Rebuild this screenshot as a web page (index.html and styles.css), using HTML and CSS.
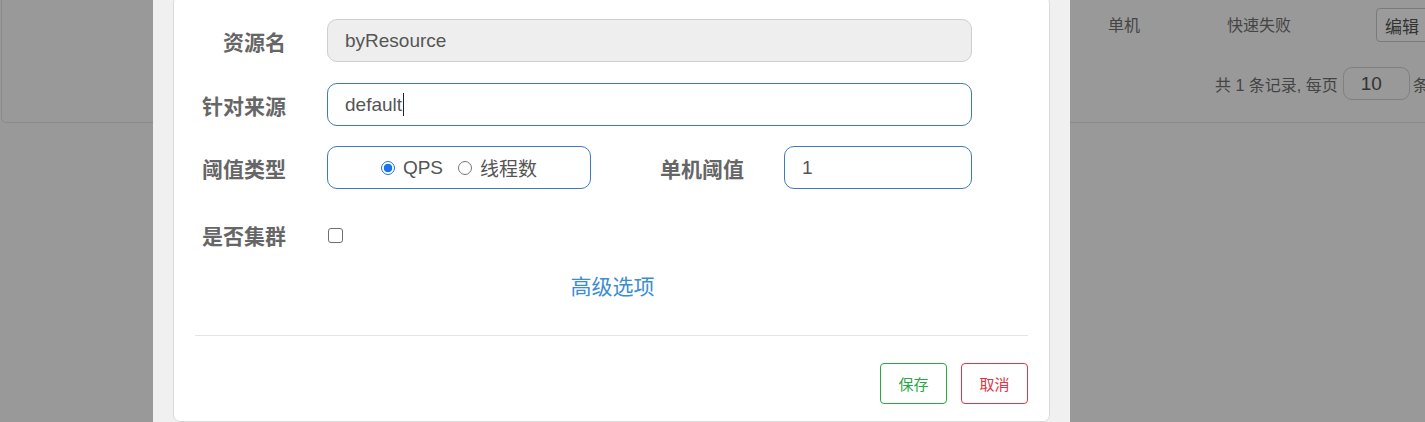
FILE: index.html
```html
<!DOCTYPE html>
<html lang="zh-CN">
<head>
<meta charset="utf-8">
<title>编辑流控规则</title>
<link rel="stylesheet" href="styles.css">
</head>
<body>
<div class="page">
  <div class="card">
    <div class="table-row">
      <span class="cell cell-mode">单机</span>
      <span class="cell cell-effect">快速失败</span>
      <span class="cell cell-op"><button class="bg-btn" type="button">编辑</button></span>
    </div>
    <div class="pager">
      <span class="pager-text">共 1 条记录, 每页</span>
      <span class="pager-input">10</span>
      <span class="pager-text">条</span>
    </div>
  </div>
</div>

<div class="modal">
  <div class="dialog">
    <div class="form">
      <div class="row">
        <label class="label">资源名</label>
        <div class="field field-disabled wide">byResource</div>
      </div>
      <div class="row">
        <label class="label">针对来源</label>
        <div class="field wide">default<span class="caret"></span></div>
      </div>
      <div class="row">
        <label class="label">阈值类型</label>
        <div class="field radio-box">
          <label class="radio"><input type="radio" name="grade" checked><span>QPS</span></label>
          <label class="radio"><input type="radio" name="grade"><span>线程数</span></label>
        </div>
        <label class="label label-mid">单机阈值</label>
        <div class="field narrow">1</div>
      </div>
      <div class="row row-check">
        <label class="label">是否集群</label>
        <input class="check" type="checkbox">
      </div>
      <div class="adv"><a class="adv-link" href="#">高级选项</a></div>
    </div>
    <div class="footer">
      <button class="btn btn-save" type="button">保存</button>
      <button class="btn btn-cancel" type="button">取消</button>
    </div>
  </div>
</div>
</body>
</html>
```

FILE: styles.css
```css
html, body {
  margin: 0;
  padding: 0;
  width: 1425px;
  height: 422px;
  overflow: hidden;
  background: #999999;
  font-family: "Liberation Sans", "Noto Sans CJK SC", sans-serif;
}

.page {
  position: relative;
  height: 422px;
}

.card {
  margin-left: 1px;
  margin-top: -10px;
  width: 1500px;
  height: 133px;
  border: 1px solid #8a8a8a;
  border-radius: 5px;
  box-sizing: border-box;
}

.table-row {
  display: flex;
  align-items: center;
  height: 56px;
  padding-top: 10px;
  box-sizing: border-box;
  color: #444;
  font-size: 16px;
}

.cell-mode {
  margin-left: 1106px;
  width: 119px;
}

.cell-effect {
  width: 149px;
}

.bg-btn {
  width: 60px;
  height: 34px;
  padding: 0 0 0 8px;
  text-align: left;
  background: #9b9b9b;
  border: 1px solid #7a7a7a;
  border-radius: 4px;
  color: #333;
  font-family: "Liberation Sans", "Noto Sans CJK SC", sans-serif;
  font-size: 17px;
  margin-top: 2px;
}

.pager {
  display: flex;
  align-items: center;
  margin-top: 20px;
  padding-left: 1213px;
  color: #444;
  font-size: 16px;
}

.pager-input {
  width: 67px;
  height: 33px;
  box-sizing: border-box;
  border: 1px solid #808080;
  border-radius: 9px;
  margin: 0 3px 0 5px;
  padding-left: 17px;
  line-height: 31px;
  font-size: 19px;
  color: #333;
}

.modal {
  position: absolute;
  left: 153px;
  top: 0;
  width: 917px;
  height: 422px;
  background: #f0f0f0;
  overflow: hidden;
}

.dialog {
  margin-left: 20px;
  margin-top: -4px;
  width: 877px;
  height: 426px;
  box-sizing: border-box;
  background: #fff;
  border: 1px solid #dadada;
  border-radius: 7px;
  display: flex;
  flex-direction: column;
}

.form {
  padding-top: 22px;
  display: flex;
  flex-direction: column;
}

.row {
  display: flex;
  align-items: center;
  height: 43px;
  margin-bottom: 20px;
}

.row:first-child {
  margin-bottom: 21px;
}

.label {
  width: 112px;
  text-align: right;
  font-size: 21px;
  font-weight: bold;
  color: #666;
  margin-right: 41px;
  font-family: "Noto Sans CJK SC", "Liberation Sans", sans-serif;
}

.label-mid {
  width: 153px;
  margin-right: 40px;
}

.field {
  height: 43px;
  box-sizing: border-box;
  border: 1px solid #3b7bbf;
  border-radius: 10px;
  padding-left: 17px;
  display: flex;
  align-items: center;
  font-size: 19px;
  color: #555;
}

.field-disabled {
  background: #eeeeee;
  border-color: #cfcfcf;
}

.wide {
  width: 645px;
}

.narrow {
  width: 188px;
}

.caret {
  display: inline-block;
  width: 1px;
  height: 23px;
  background: #222;
  margin-left: 1px;
}

.radio-box {
  width: 264px;
  padding-left: 0;
  justify-content: center;
  gap: 15px;
}

.radio {
  display: flex;
  align-items: center;
  gap: 8px;
  font-family: "Liberation Sans", "Noto Sans CJK SC", sans-serif;
  color: #555;
  font-size: 19px;
}

.radio input {
  appearance: none;
  -webkit-appearance: none;
  margin: 0;
  width: 14px;
  height: 14px;
  border: 1px solid #767676;
  border-radius: 50%;
  box-sizing: border-box;
  background: #fff;
}

.radio input:checked {
  border: 1.5px solid #1a73e8;
  background: radial-gradient(circle, #1a73e8 0 4px, #fff 4.6px);
}

.row-check {
  margin-top: 4px;
}

.check {
  appearance: none;
  -webkit-appearance: none;
  margin: 1px 0 0 1px;
  width: 15px;
  height: 15px;
  box-sizing: border-box;
  border: 1px solid #6e6e6e;
  border-radius: 3px;
  background: #fff;
}

.adv {
  margin-top: -6px;
  text-align: center;
  font-size: 21px;
}

.adv-link {
  color: #3c8dd3;
  text-decoration: none;
  font-family: "Noto Sans CJK SC", "Liberation Sans", sans-serif;
  font-weight: normal;
  position: relative;
  left: 1px;
}

.footer {
  margin: 35px 21px 0 21px;
  border-top: 1px solid #e5e5e5;
  padding-top: 27px;
  display: flex;
  justify-content: flex-end;
  gap: 14px;
}

.btn {
  width: 67px;
  height: 41px;
  box-sizing: border-box;
  background: #fff;
  border-radius: 4px;
  font-size: 15px;
  font-family: "Noto Sans CJK SC", "Liberation Sans", sans-serif;
  padding: 0;
}

.btn-save {
  border: 1px solid #28a745;
  color: #28a745;
}

.btn-cancel {
  border: 1px solid #dc3545;
  color: #dc3545;
}
```
